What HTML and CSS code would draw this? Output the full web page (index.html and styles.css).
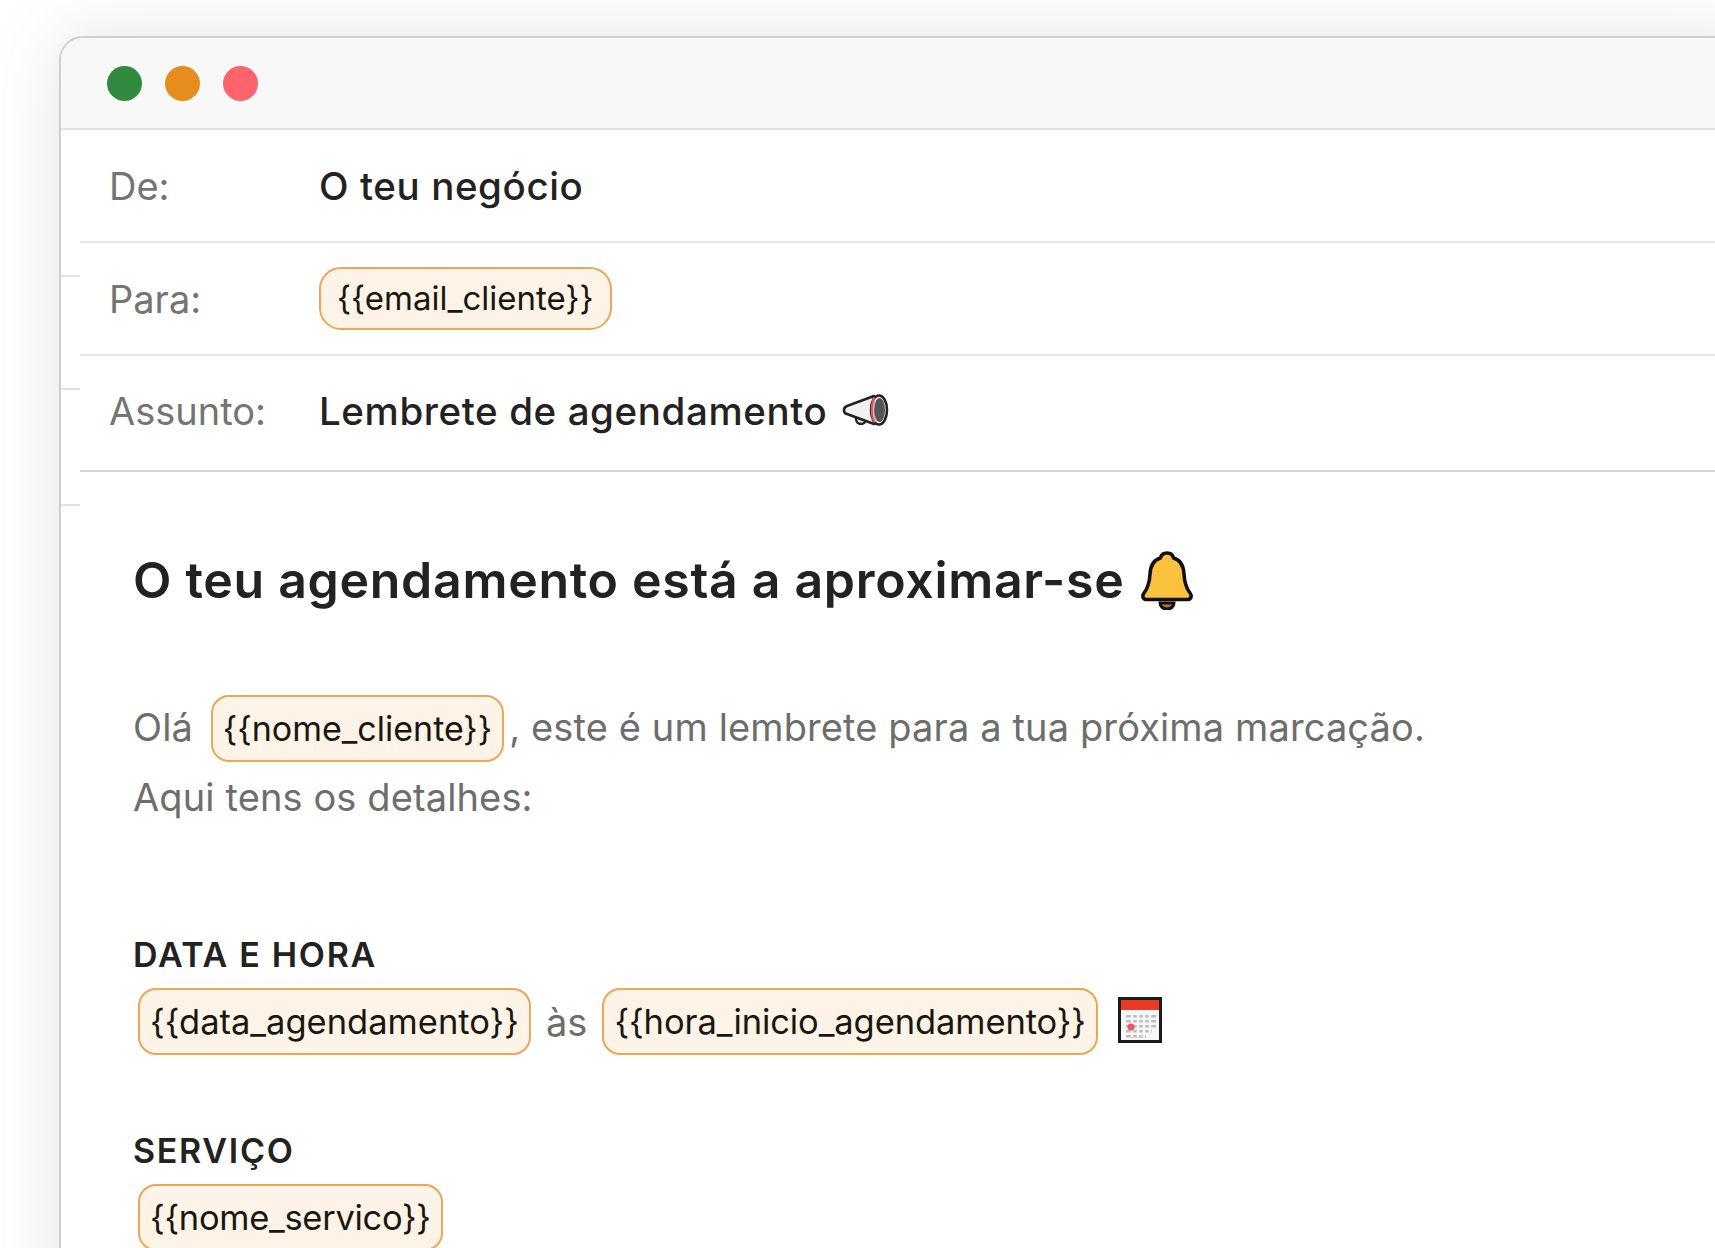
FILE: index.html
```html
<!DOCTYPE html>
<html lang="pt">
<head>
<meta charset="utf-8">
<title>Lembrete de agendamento</title>
<link rel="stylesheet" href="styles.css">
</head>
<body>
<main class="window">
  <header class="titlebar">
    <span class="dot dot-green"></span>
    <span class="dot dot-orange"></span>
    <span class="dot dot-red"></span>
  </header>
  <section class="fields">
    <div class="field field-de">
      <span class="field-label">De:</span>
      <span class="field-value">O teu negócio</span>
    </div>
    <div class="field field-para">
      <span class="field-label">Para:</span>
      <span class="chip chip-small">{{email_cliente}}</span>
    </div>
    <div class="field field-assunto">
      <span class="field-label">Assunto:</span>
      <span class="field-value">Lembrete de agendamento</span>
      <svg class="icon-mega" viewBox="0 0 48 36" aria-hidden="true">
        <circle cx="20" cy="26" r="5" fill="#e4e4e4" stroke="#222" stroke-width="2.4"/>
        <path d="M33 3 6 13c-4 1.500-4 7 0 8l27 10z" fill="#f1f1f1" stroke="#222" stroke-width="2.600" stroke-linejoin="round"/>
        <ellipse cx="38" cy="17" rx="8" ry="14.500" fill="#f4f4f4" stroke="#222" stroke-width="2.600"/>
        <path d="M33.500 4.500c-3.500 7-3.500 18 0 25" fill="none" stroke="#e05565" stroke-width="2.400"/>
        <ellipse cx="38.500" cy="17" rx="5.500" ry="12" fill="#555"/>
      </svg>
    </div>
  </section>
  <section class="content">
    <h1 class="title">O teu agendamento está a aproximar-se
      <svg class="icon-bell" viewBox="0 0 54 60" aria-hidden="true">
        <path d="M20 53a7 6 0 0 0 14 0z" fill="#b9762a" stroke="#111" stroke-width="3"/>
        <path d="M27 3c-4 0-6 2.500-6.500 5C13 10 10.500 16 10 24c-.5 9-2 14-6 19-2 2.500-1.500 6 2 6.500h42c3.500-.5 4-4 2-6.500-4-5-5.500-10-6-19-.5-8-3-14-10.500-16C33 5.500 31 3 27 3z" fill="#fcc13f" stroke="#111" stroke-width="3.600" stroke-linejoin="round"/>
      </svg>
    </h1>
    <p class="intro">
      <span class="intro-line">Olá <span class="chip chip-name">{{nome_cliente}}</span> , este é um lembrete para a tua próxima marcação.</span>
      <span class="intro-line">Aqui tens os detalhes:</span>
    </p>
    <h2 class="label label-first">DATA E HORA</h2>
    <div class="chip-row">
      <span class="chip">{{data_agendamento}}</span>
      <span class="joiner">às</span>
      <span class="chip chip-time">{{hora_inicio_agendamento}}</span>
      <svg class="icon-cal" viewBox="0 0 44 46" aria-hidden="true">
        <rect x="1.500" y="1.500" width="41" height="43" fill="#f6f6f6" stroke="#1c1c1c" stroke-width="3"/>
        <rect x="3" y="3" width="38" height="10" fill="#ea3a24"/>
        <path d="M8 18h30v2.500H8zM8 23h30v2.500H8zM8 28h30v2.500H8zM8 33h26v2.500H8zM8 38h20v2.500H8z" fill="#bdbdbd"/>
        <path d="M14 18v22M20 18v22M26 18v22M32 18v20" stroke="#f6f6f6" stroke-width="2.500"/>
        <circle cx="13" cy="30" r="3.500" fill="#e9566a"/>
      </svg>
    </div>
    <h2 class="label">SERVIÇO</h2>
    <div class="chip-row">
      <span class="chip chip-service">{{nome_servico}}</span>
    </div>
  </section>
</main>
</body>
</html>
```
FILE: styles.css
```css
* { box-sizing: border-box; }
html, body { height: 100%; }
body {
  margin: 0;
  background: #fff;
  overflow: hidden;
  font-family: "Inter", "Noto Sans", sans-serif;
  color: #222;
}
.window {
  margin: 36px -40px 0 59px;
  height: 1300px;
  background: #fff;
  border: 2px solid #cfcfd2;
  border-right: 0;
  border-bottom: 0;
  border-radius: 24px 0 0 0;
  box-shadow: 0 0 70px rgba(90, 95, 120, .17);
  position: relative;
}
.titlebar {
  height: 92px;
  padding-left: 46px;
  display: flex;
  align-items: center;
  gap: 23px;
  background: #f8f8f8;
  border-bottom: 2px solid #e2e2e2;
  border-radius: 22px 0 0 0;
}
.dot { width: 35px; height: 35px; border-radius: 50%; }
.dot-green { background: #318a3e; }
.dot-orange { background: #e78d1e; }
.dot-red { background: #fe646d; }
.fields { margin-left: 19px; }
.field {
  display: flex;
  align-items: center;
  height: 113px;
  padding-left: 29px;
  border-bottom: 2px solid #e6e6e6;
  position: relative;
  font-size: 38px;
}
.field-assunto { height: 116px; padding-bottom: 4px; border-bottom: 2px solid #d4d4d4; }
.field::after {
  content: "";
  position: absolute;
  left: -19px;
  bottom: -36px;
  width: 19px;
  height: 2px;
  background: #e2e2e2;
}
.field-label { width: 210px; color: #747474; }
.field-value { color: #222; font-size: 38.5px; letter-spacing: .6px; font-weight: 500; }
.chip {
  display: inline-block;
  padding: 9px 10px;
  font-size: 34.5px;
  line-height: 45px;
  color: #1a1610;
  background: #fdf3e6;
  border: 2px solid #eaa755;
  border-radius: 18px;
  white-space: nowrap;
}
.chip-small { padding: 6px 16px; font-size: 33px; line-height: 47px; border-radius: 22px; }
.chip-name { font-size: 34px; letter-spacing: 0; padding: 9px 10px; margin: 0 -6px 0 7px; }
.chip-time { letter-spacing: -.1px; }
.chip-service { letter-spacing: -.3px; }
.icon-mega { width: 48px; height: 36px; margin-left: 14px; }
.content { padding: 0 0 0 72px; }
.title {
  margin: 72px 0 0;
  font-size: 50px;
  letter-spacing: .7px;
  line-height: 72px;
  font-weight: 600;
  color: #222;
  display: flex;
  align-items: center;
  gap: 16px;
}
.icon-bell { width: 54px; height: 60px; }
.intro { margin: 76px 0 0; font-size: 38px; letter-spacing: .12px; color: #6d6d6d; }
.intro-line { display: block; line-height: 70px; }
.label {
  margin: 73px 0 0;
  font-size: 34px;
  line-height: 46px;
  font-weight: 600;
  letter-spacing: 1.700px;
  color: #222;
}
.label-first { margin-top: 100px; }
.chip-row {
  display: flex;
  align-items: center;
  gap: 15px;
  margin: 10px 0 0 5px;
  font-size: 38px;
  color: #6d6d6d;
}
.icon-cal { width: 44px; height: 46px; margin: 0 0 4px 5px; }
```
